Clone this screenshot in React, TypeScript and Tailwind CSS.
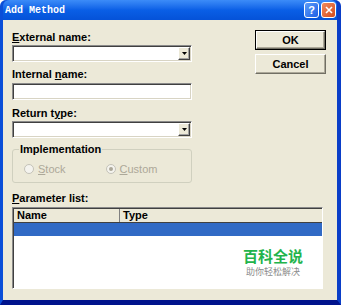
import React from "react";

const sans = { fontFamily: '"Liberation Sans", Arial, sans-serif' };
const cjk = { fontFamily: '"Noto Sans CJK SC", sans-serif' };

function Sunken({ children, className = "" }: { children?: React.ReactNode; className?: string }) {
  return (
    <div
      className={`border border-t-[#8a8a8a] border-l-[#8a8a8a] border-b-white border-r-white bg-white shadow-[inset_1px_1px_0_#404040,inset_-1px_-1px_0_#d8d4c4] ${className}`}
    >
      {children}
    </div>
  );
}

function Combo() {
  return (
    <Sunken className="flex h-[17px] justify-end p-[1px]">
      <div className="flex w-[12px] items-center justify-center border border-t-white border-l-white border-b-[#404040] border-r-[#404040] bg-[#ece9d8] shadow-[inset_-1px_-1px_0_#a0a0a0]">
        <svg width="5" height="3" viewBox="0 0 5 3">
          <path d="M0 0h5L2.5 3z" fill="#000" />
        </svg>
      </div>
    </Sunken>
  );
}

function Label({ children }: { children: React.ReactNode }) {
  return <div className="h-[13px] text-[11px] font-bold leading-[13px] text-black">{children}</div>;
}

function Btn({ children, isDefault }: { children: React.ReactNode; isDefault?: boolean }) {
  return (
    <div className={`h-[20px] w-[71px] ${isDefault ? "border border-black" : ""}`}>
      <div className="flex h-full w-full items-center justify-center border border-t-white border-l-white border-b-[#716f64] border-r-[#716f64] bg-[#ece9d8] text-[11px] font-bold text-black shadow-[inset_-1px_-1px_0_#aca899]">
        {children}
      </div>
    </div>
  );
}

function Radio({ checked, label }: { checked?: boolean; label: React.ReactNode }) {
  return (
    <div className="flex items-center gap-[4px] text-[11px] text-[#aca899]">
      <span className="relative h-[10px] w-[10px] rounded-full border border-[#c4c2b8] bg-[#f4f3ee]">
        {checked && <span className="absolute left-[2px] top-[2px] h-[4px] w-[4px] rounded-full bg-[#aca899]" />}
      </span>
      <span>{label}</span>
    </div>
  );
}

export default function App() {
  return (
    <div className="h-[305px] w-[341px] overflow-hidden bg-white" style={sans}>
      <div className="flex h-[305px] w-[341px] flex-col rounded-t-[6px] border-b-[5px] border-l-[3px] border-r-[4px] border-b-[#00138c] border-l-[#0a4ed8] border-r-[#0a3ec8] bg-[#0a4ed8]">
        {/* title bar */}
        <div className="flex h-[20px] items-center justify-between rounded-t-[6px] bg-gradient-to-b from-[#3c8cf8] via-[#0a5fe6] to-[#0552d8] pl-[2px] pr-[1px]">
          <span className="text-[10px] font-bold text-white" style={{ fontFamily: '"Liberation Mono", monospace' }}>
            Add Method
          </span>
          <div className="flex gap-[2px]">
            <div className="flex h-[16px] w-[15px] items-center justify-center rounded-[3px] border border-white bg-gradient-to-br from-[#5d9cf8] to-[#1f5ee6] text-[11px] font-bold leading-none text-white">
              ?
            </div>
            <div className="flex h-[16px] w-[15px] items-center justify-center rounded-[3px] border border-white bg-gradient-to-br from-[#f08a5c] to-[#d44a1a]">
              <svg width="8" height="8" viewBox="0 0 8 8">
                <path d="M1 1l6 6M7 1L1 7" stroke="#fff" strokeWidth="1.6" />
              </svg>
            </div>
          </div>
        </div>

        {/* body */}
        <div className="flex flex-1 flex-col bg-[#ece9d8] pl-[9px] pr-[11px] pt-[11px]">
          <div className="flex justify-between">
            <div className="flex w-[180px] flex-col">
              <Label>
                <u>E</u>xternal name:
              </Label>
              <div className="mt-[1px]">
                <Combo />
              </div>
              <div className="mt-[6px]">
                <Label>
                  Internal <u>n</u>ame:
                </Label>
              </div>
              <Sunken className="mt-[2px] h-[17px]" />
              <div className="mt-[7px]">
                <Label>
                  Return t<u>y</u>pe:
                </Label>
              </div>
              <div className="mt-[1px]">
                <Combo />
              </div>
              <fieldset className="mt-[5px] h-[40px] rounded-[3px] border border-[#d0d0bf] px-[6px]">
                <legend className="px-[1px] text-[11px] font-bold leading-[13px] text-black">Implementation</legend>
                <div className="mt-[5px] flex gap-[40px] pl-[5px]">
                  <Radio label={<><u>S</u>tock</>} />
                  <Radio checked label={<><u>C</u>ustom</>} />
                </div>
              </fieldset>
            </div>
            <div className="mt-[-1px] flex flex-col gap-[4px]">
              <Btn isDefault>OK</Btn>
              <Btn>Cancel</Btn>
            </div>
          </div>

          <div className="mt-[9px]">
            <Label>
              <u>P</u>arameter list:
            </Label>
          </div>
          <div className="mt-[2px] flex h-[82px] w-[311px] flex-col border border-t-[#8a8a8a] border-l-[#8a8a8a] border-b-white border-r-white bg-white shadow-[inset_1px_1px_0_#404040]">
            <div className="ml-[1px] mt-[1px] flex h-[13px] bg-[#ece9d8] text-[11px] font-bold leading-[13px] text-black">
              <div className="w-[106px] border-r border-r-[#808080] pl-[3px]">Name</div>
              <div className="flex-1 pl-[3px]">Type</div>
            </div>
            <div className="ml-[1px] h-[14px] border-t border-t-[#404040] bg-[#316ac5]" />
            <div className="flex flex-1 flex-col items-end pr-[19px] pt-[10px]">
              <div className="text-[15px] font-bold leading-[19px] text-[#22b44c]" style={cjk}>
                百科全说
              </div>
              <div className="mr-[3px] mt-[1px] text-[9px] leading-[11px] text-[#8c8c8c]" style={cjk}>
                助你轻松解决
              </div>
            </div>
          </div>
        </div>
      </div>
    </div>
  );
}
